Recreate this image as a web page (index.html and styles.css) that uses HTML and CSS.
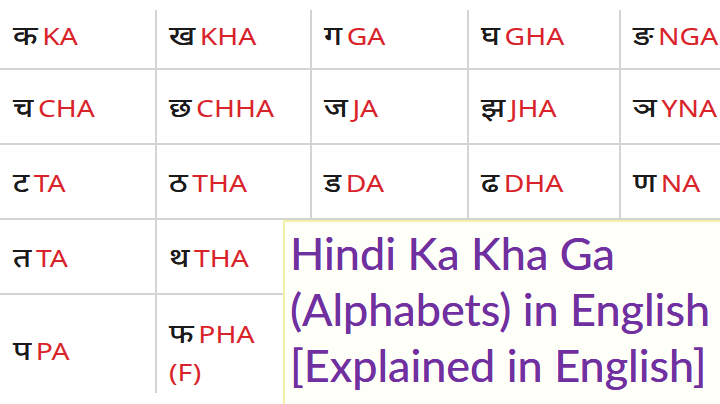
FILE: index.html
```html
<!DOCTYPE html>
<html lang="hi">
<head>
<meta charset="utf-8">
<title>Hindi Ka Kha Ga</title>
<link rel="stylesheet" href="styles.css">
</head>
<body>
<div class="page">
  <div class="chart">
    <div class="cell top first"><div class="pair"><span class="hi">क</span><span class="en">KA</span></div></div>
    <div class="cell top"><div class="pair"><span class="hi">ख</span><span class="en">KHA</span></div></div>
    <div class="cell top"><div class="pair"><span class="hi">ग</span><span class="en">GA</span></div></div>
    <div class="cell top"><div class="pair"><span class="hi">घ</span><span class="en">GHA</span></div></div>
    <div class="cell top"><div class="pair"><span class="hi">ङ</span><span class="en">NGA</span></div></div>

    <div class="cell first"><div class="pair"><span class="hi">च</span><span class="en">CHA</span></div></div>
    <div class="cell"><div class="pair"><span class="hi">छ</span><span class="en">CHHA</span></div></div>
    <div class="cell"><div class="pair"><span class="hi">ज</span><span class="en">JA</span></div></div>
    <div class="cell"><div class="pair"><span class="hi">झ</span><span class="en">JHA</span></div></div>
    <div class="cell"><div class="pair"><span class="hi">ञ</span><span class="en">YNA</span></div></div>

    <div class="cell first"><div class="pair"><span class="hi">ट</span><span class="en">TA</span></div></div>
    <div class="cell"><div class="pair"><span class="hi">ठ</span><span class="en">THA</span></div></div>
    <div class="cell"><div class="pair"><span class="hi">ड</span><span class="en">DA</span></div></div>
    <div class="cell"><div class="pair"><span class="hi">ढ</span><span class="en">DHA</span></div></div>
    <div class="cell"><div class="pair"><span class="hi">ण</span><span class="en">NA</span></div></div>

    <div class="cell first"><div class="pair"><span class="hi">त</span><span class="en">TA</span></div></div>
    <div class="cell"><div class="pair"><span class="hi">थ</span><span class="en">THA</span></div></div>
    <div class="cell"></div>
    <div class="cell"></div>
    <div class="cell"></div>

    <div class="cell last first"><div class="pair"><span class="hi">प</span><span class="en">PA</span></div></div>
    <div class="cell last"><div class="pair"><span class="hi">फ</span><span class="en">PHA</span></div><div class="pair"><span class="en">(F)</span></div></div>
    <div class="cell last"></div>
    <div class="cell last"></div>
    <div class="cell last"></div>
  </div>

  <div class="title-box">
    <p class="title">Hindi Ka Kha Ga<br>(Alphabets) in English<br>[Explained in English]</p>
  </div>
</div>
</body>
</html>
```

FILE: styles.css
```css
html, body {
  margin: 0;
  padding: 0;
  background: #ffffff;
}

.page {
  position: relative;
  width: 720px;
  height: 404px;
  overflow: hidden;
  font-family: "Noto Sans", "Open Sans", sans-serif;
}

.chart {
  display: grid;
  grid-template-columns: 155px 155px 157px 152px 160px;
  grid-template-rows: 70px 75px 75px 75px 98px;
  width: 799px;
}

.cell {
  display: flex;
  flex-direction: column;
  justify-content: center;
  padding-left: 12px;
  padding-top: 5px;
  border-left: 2px solid #d4d4d4;
  border-bottom: 2px solid #d4d4d4;
  line-height: 35px;
  white-space: nowrap;
}

.cell.first {
  border-left: none;
  padding-left: 13px;
}

.cell.top {
  border-left: none;
  padding-left: 14px;
  background-image: linear-gradient(#d4d4d4, #d4d4d4);
  background-size: 2px calc(100% - 10px);
  background-position: left bottom;
  background-repeat: no-repeat;
}

.cell.top.first {
  padding-left: 13px;
  background-image: none;
}

.cell.last {
  border-bottom: none;
  padding-top: 16px;
}

.pair {
  display: flex;
  align-items: baseline;
  gap: 4px;
  transform: scaleX(1.18);
  transform-origin: left center;
}

.hi {
  color: #1a1a1a;
  font-family: "Noto Sans Devanagari", "Noto Sans", sans-serif;
  font-size: 27px;
  text-shadow: 0 0 0.4px #1a1a1a;
}

.en {
  color: #d9232b;
  font-size: 24px;
}

.title-box {
  position: absolute;
  left: 283px;
  top: 220px;
  width: 460px;
  height: 200px;
  background: #fffffa;
  border: 2px solid #f4f0a6;
  box-sizing: border-box;
}

.title {
  margin: 0;
  padding: 3px 0 0 5px;
  font-family: "Lato", "Open Sans", sans-serif;
  font-size: 45px;
  font-weight: 400;
  line-height: 56px;
  color: #7030a0;
  white-space: nowrap;
  text-shadow: 0 0 0.4px #7030a0;
}
```
